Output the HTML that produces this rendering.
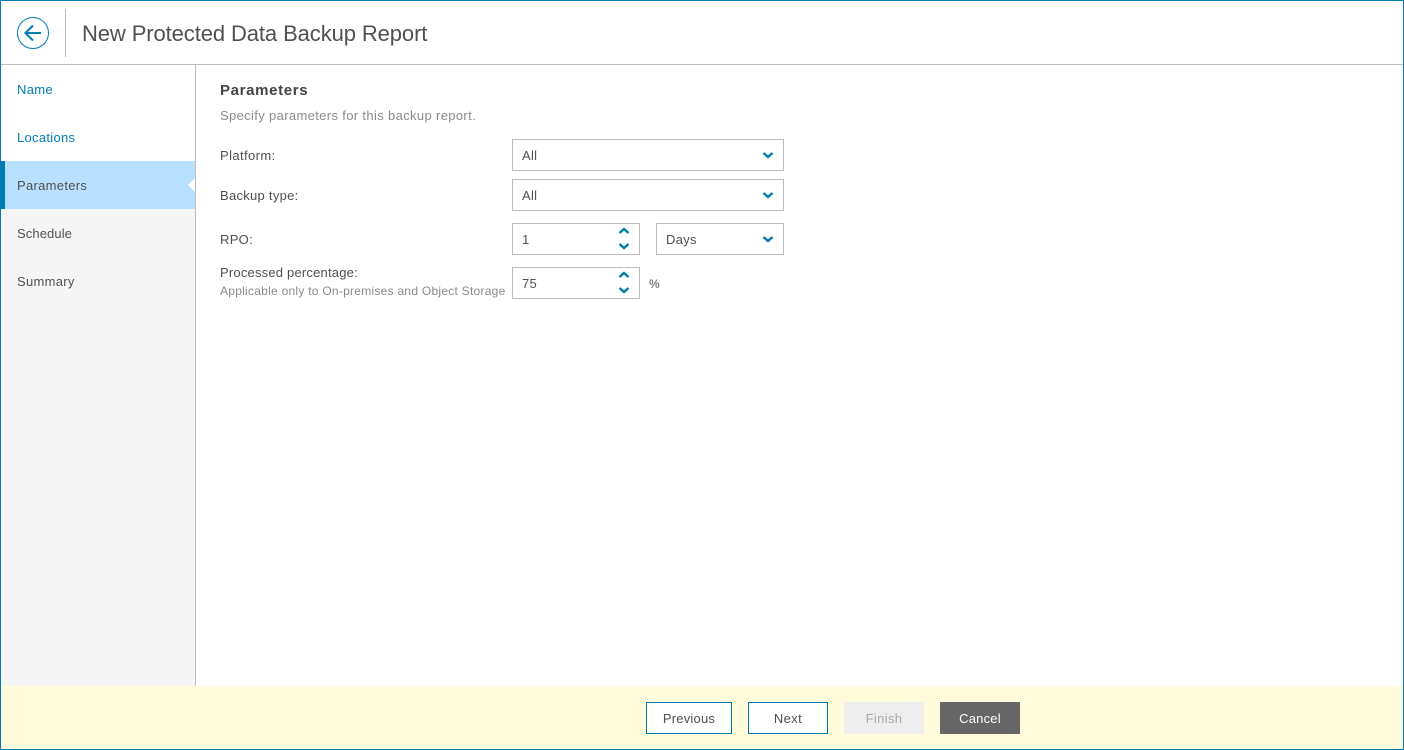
<!DOCTYPE html>
<html lang="en">
<head>
<meta charset="utf-8">
<title>New Protected Data Backup Report</title>
<style>
html,body{margin:0;padding:0;background:#fff}
#p{position:relative;width:1404px;height:750px;overflow:hidden;background:#fff;font-family:"Liberation Sans",sans-serif;font-size:13px;color:#505050}
#p div,#p span,#p svg{position:absolute}
.t{white-space:nowrap;line-height:16px;letter-spacing:.3px}
.box{box-sizing:border-box;border:1px solid #bdbdbd;background:#fff;height:32px}
.btn{box-sizing:border-box;height:32px;line-height:32px;text-align:center;white-space:nowrap;letter-spacing:.2px}
</style>
</head>
<body>
<div id="p">
  <!-- sidebar -->
  <div style="left:1px;top:161px;width:194px;height:48px;background:#b8e0ff"></div>
  <div style="left:1px;top:209px;width:194px;height:477px;background:#f5f5f5"></div>
  <div style="left:1px;top:161px;width:4px;height:48px;background:#007cb5"></div>
  <div style="left:195px;top:65px;width:1px;height:621px;background:#bdbdbd"></div>
  <svg style="left:187px;top:176px" width="9" height="18" viewBox="0 0 9 18"><path d="M8 2 L1 9 L8 16 Z" fill="#fff"/></svg>
  <span class="t" style="left:17px;top:82px;color:#007cb5">Name</span>
  <span class="t" style="left:17px;top:130px;color:#007cb5">Locations</span>
  <span class="t" style="left:17px;top:178px">Parameters</span>
  <span class="t" style="left:17px;top:226px;letter-spacing:.1px">Schedule</span>
  <span class="t" style="left:17px;top:274px">Summary</span>

  <!-- header -->
  <div style="left:1px;top:64px;width:1402px;height:1px;background:#bdbdbd"></div>
  <div style="left:65px;top:9px;width:1px;height:48px;background:#bdbdbd"></div>
  <svg style="left:16px;top:16px" width="34" height="34" viewBox="0 0 34 34" fill="none" stroke="#007cb5">
    <circle cx="17" cy="17" r="15.5" stroke-width="1"/>
    <path d="M9 17 H25 M17 9.500 L9.400 17 L17 24.500" stroke-width="2"/>
  </svg>
  <span class="t" style="left:82px;top:20px;font-size:22px;line-height:28px;letter-spacing:-.1px">New Protected Data Backup Report</span>

  <!-- content -->
  <span class="t" style="left:220px;top:83px;font-size:15px;font-weight:bold;color:#444;letter-spacing:.65px">Parameters</span>
  <span class="t" style="left:220px;top:108px;color:#8a8a8a;letter-spacing:.35px">Specify parameters for this backup report.</span>
  <span class="t" style="left:220px;top:148px;letter-spacing:.4px">Platform:</span>
  <span class="t" style="left:220px;top:188px;letter-spacing:.28px">Backup type:</span>
  <span class="t" style="left:220px;top:232px">RPO:</span>
  <span class="t" style="left:220px;top:265px;letter-spacing:.2px">Processed percentage:</span>
  <span class="t" style="left:220px;top:283px;font-size:12px;color:#8a8a8a;letter-spacing:.26px">Applicable only to On-premises and Object Storage</span>

  <div class="box" style="left:512px;top:139px;width:272px"></div>
  <div class="box" style="left:512px;top:179px;width:272px"></div>
  <div class="box" style="left:512px;top:223px;width:128px"></div>
  <div class="box" style="left:656px;top:223px;width:128px"></div>
  <div class="box" style="left:512px;top:267px;width:128px"></div>
  <span class="t" style="left:522px;top:148px">All</span>
  <span class="t" style="left:522px;top:188px">All</span>
  <span class="t" style="left:522px;top:232px">1</span>
  <span class="t" style="left:666px;top:232px">Days</span>
  <span class="t" style="left:522px;top:276px">75</span>
  <span class="t" style="left:649px;top:276px;font-size:12px;letter-spacing:0">%</span>

  <svg style="left:0;top:0" width="1404" height="750" fill="none" stroke="#007cb5" stroke-width="2.4">
    <path d="M763.500 153 L768 157 L772.500 153"/>
    <path d="M763.500 193 L768 197 L772.500 193"/>
    <path d="M763.500 237 L768 241 L772.500 237"/>
    <path d="M619.500 233 L624 229 L628.500 233"/>
    <path d="M619.500 244 L624 248 L628.500 244"/>
    <path d="M619.500 277 L624 273 L628.500 277"/>
    <path d="M619.500 288 L624 292 L628.500 288"/>
  </svg>

  <!-- footer -->
  <div style="left:1px;top:686px;width:1402px;height:63px;background:#fffbdb"></div>
  <div class="btn" style="left:646px;top:702px;width:86px;background:#fff;border:1px solid #007cb5;line-height:31px">Previous</div>
  <div class="btn" style="left:748px;top:702px;width:80px;background:#fff;border:1px solid #007cb5;line-height:31px;letter-spacing:.35px">Next</div>
  <div class="btn" style="left:844px;top:702px;width:80px;background:#eee;color:#a8a8a8;line-height:33px;letter-spacing:.35px">Finish</div>
  <div class="btn" style="left:940px;top:702px;width:80px;background:#666;color:#fff;line-height:33px">Cancel</div>

  <!-- window frame -->
  <div style="left:0;top:0;width:1404px;height:750px;box-sizing:border-box;border:1px solid #007cb5"></div>
</div>
</body>
</html>
